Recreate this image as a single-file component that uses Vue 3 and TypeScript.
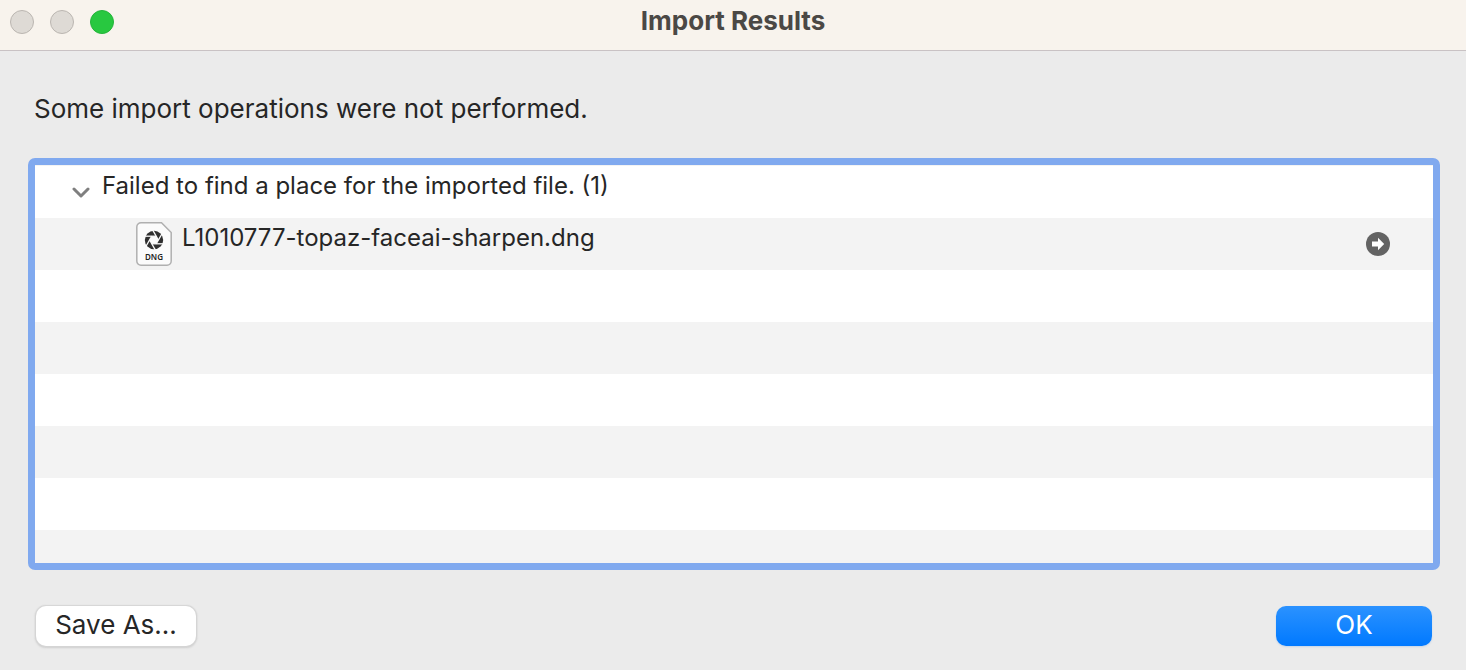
<script setup lang="ts">
import { computed, ref } from 'vue'

interface FailedFile {
  name: string
  kind: string
}

interface FailureGroup {
  reason: string
  files: FailedFile[]
}

const group: FailureGroup = {
  reason: 'Failed to find a place for the imported file.',
  files: [{ name: 'L1010777-topaz-faceai-sharpen.dng', kind: 'DNG' }],
}

const expanded = ref(true)
const heading = computed(() => `${group.reason} (${group.files.length})`)
const blades = [0, 60, 120, 180, 240, 300]
</script>

<template>
  <main class="dialog">
    <header class="titlebar">
      <div class="lights">
        <button class="light" type="button" aria-label="Close" disabled></button>
        <button class="light" type="button" aria-label="Minimize" disabled></button>
        <button class="light zoom" type="button" aria-label="Zoom"></button>
      </div>
      <h1 class="title">Import Results</h1>
    </header>

    <section class="content">
      <p class="message">Some import operations were not performed.</p>

      <div class="results" tabindex="0">
        <div class="row group">
          <button
            class="toggle"
            type="button"
            aria-label="Toggle group"
            :aria-expanded="expanded"
            @click="expanded = !expanded"
          >
            <svg :class="{ closed: !expanded }" width="18" height="12" viewBox="0 0 18 12">
              <path d="M2 3 9 10 16 3" fill="none" stroke="#7f7f7f" stroke-width="3" stroke-linecap="round" stroke-linejoin="round" />
            </svg>
          </button>
          <span class="label">{{ heading }}</span>
        </div>
        <template v-if="expanded">
          <div v-for="file in group.files" :key="file.name" class="row file">
            <svg class="doc" width="36" height="44" viewBox="0 0 36 44">
              <path d="M5 .8H25.500L35.200 10.500V39a4.200 4.200 0 0 1-4.200 4.200H5A4.200 4.200 0 0 1 .8 39V5A4.200 4.200 0 0 1 5 .8Z" fill="#fbfbfb" stroke="#b0b0b0" stroke-width="1.500" />
              <g transform="translate(18 18)">
                <circle r="9.200" fill="#303030" />
                <path d="M4.400 0 2.200 3.800H-2.200L-4.400 0-2.200-3.800H2.200Z" fill="#fbfbfb" />
                <path v-for="angle in blades" :key="angle" d="M2.200-3.800H-10" :transform="`rotate(${angle})`" stroke="#fbfbfb" stroke-width="1.300" />
              </g>
              <text x="18" y="38" text-anchor="middle" class="kind">{{ file.kind }}</text>
            </svg>
            <span class="label">{{ file.name }}</span>
            <button class="reveal" type="button" :aria-label="`Show ${file.name}`">
              <svg width="24" height="24" viewBox="0 0 24 24">
                <circle cx="12" cy="12" r="12" fill="#636363" />
                <path d="M6 9.500H12V5.800L18.200 12 12 18.200V14.500H6Z" fill="#fff" />
              </svg>
            </button>
          </div>
        </template>
      </div>

      <footer class="actions">
        <button class="button save" type="button">Save As...</button>
        <button class="button ok" type="button">OK</button>
      </footer>
    </section>
  </main>
</template>

<style>
body {
  margin: 0;
}
</style>

<style scoped>
.dialog {
  display: flex;
  flex-direction: column;
  box-sizing: border-box;
  height: 100vh;
  min-height: 400px;
  background: #ebebeb;
  color: #262626;
  font-family: Inter, "Liberation Sans", sans-serif;
}

button {
  padding: 0;
  border: 0;
  background: none;
  font: inherit;
}

.titlebar {
  display: grid;
  grid-template-columns: 1fr auto 1fr;
  align-items: center;
  height: 50px;
  padding: 0 10px;
  border-bottom: 1px solid #c9c2c4;
  background: #f8f3ed;
}

.lights {
  display: flex;
  gap: 16px;
  padding-bottom: 6px;
}

.light {
  box-sizing: border-box;
  width: 24px;
  height: 24px;
  border: 1px solid #bbb6b1;
  border-radius: 50%;
  background: #dedad5;
}

.zoom {
  border-color: #24b43a;
  background: #28c840;
}

.title {
  margin: 0;
  padding-bottom: 8px;
  color: #4b4845;
  font-size: 26px;
  font-weight: 700;
  line-height: 32px;
}

.content {
  display: flex;
  flex: 1;
  flex-direction: column;
  min-height: 0;
  padding: 42px 26px 24px 28px;
}

.message {
  margin: 0 0 33px;
  padding-left: 6px;
  font-size: 26px;
  line-height: 32px;
}

.results {
  flex: 1;
  min-height: 0;
  padding-top: 1px;
  overflow: hidden;
  border: 7px solid #80a9ef;
  border-radius: 7px;
  outline: none;
  background: repeating-linear-gradient(#fff 0 52px, #f3f3f3 52px 104px) 0 1px padding-box #fff;
}

.row {
  display: flex;
  align-items: center;
  height: 52px;
}

.label {
  padding-bottom: 12px;
  font-size: 24px;
  line-height: 32px;
  white-space: nowrap;
}

.group {
  gap: 12px;
  padding-left: 37px;
}

.toggle {
  display: flex;
}

.closed {
  transform: rotate(-90deg);
}

.file {
  gap: 10px;
  padding: 0 43px 0 101px;
}

.kind {
  fill: #222;
  font-family: "Noto Sans", sans-serif;
  font-size: 8px;
  font-weight: 600;
}

.reveal {
  display: flex;
  margin-left: auto;
}

.actions {
  display: flex;
  justify-content: space-between;
  margin-top: 36px;
  padding: 0 8px;
}

.button {
  height: 40px;
  padding-bottom: 2px;
  border-radius: 10px;
  font-size: 26px;
  line-height: 32px;
}

.save {
  width: 160px;
  background: #fff;
  box-shadow: 0 0 1px 1px #d5d5d5, 0 1px 2px 1px #cfcfcf;
  color: #262626;
}

.ok {
  width: 156px;
  background: linear-gradient(#2b92ff, #0079ff);
  box-shadow: 0 1px 2px #c3d4e8;
  color: #fff;
}
</style>
